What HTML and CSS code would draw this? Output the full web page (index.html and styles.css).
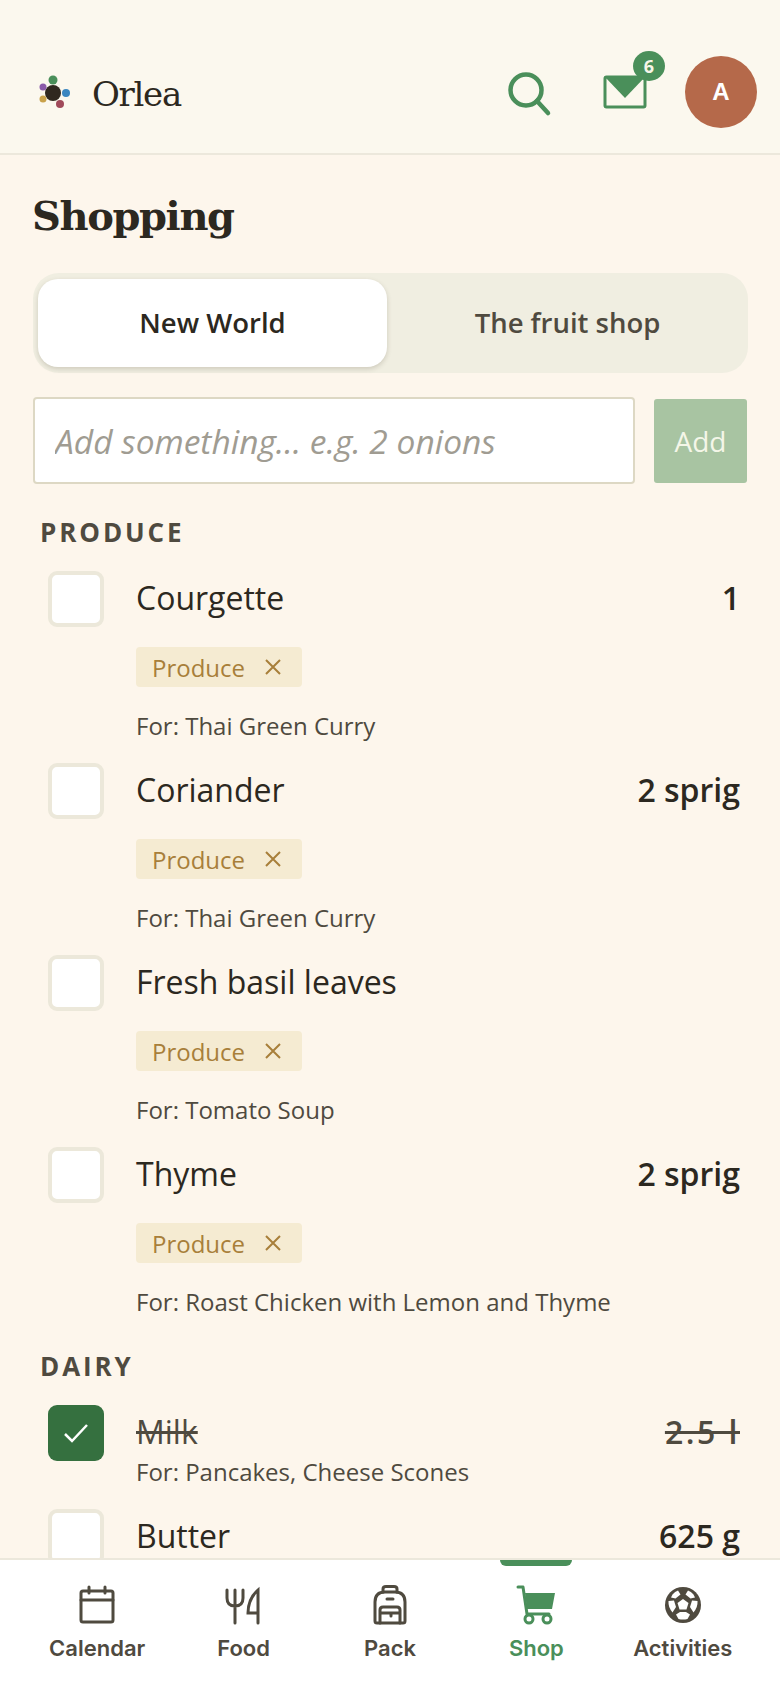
FILE: index.html
```html
<!DOCTYPE html>
<html lang="en">
<head>
    <meta charset="UTF-8">
    <title>Orlea - Shopping</title>
    <link rel="stylesheet" href="styles.css">
</head>
<body>
<div class="app">
    <header class="topbar">
        <div class="brand">
            <svg class="brand-mark" width="40" height="40" viewBox="0 0 40 40">
                <circle cx="20" cy="19" r="8" fill="#30281f"/>
                <circle cx="20" cy="6" r="4.5" fill="#4a8f5a"/>
                <circle cx="10" cy="13" r="3.5" fill="#8a5aa8"/>
                <circle cx="33" cy="19" r="4" fill="#3a86c0"/>
                <circle cx="10" cy="25" r="3.5" fill="#c9a24a"/>
                <circle cx="27" cy="30" r="4" fill="#a04a5a"/>
            </svg>
            <span class="brand-name">Orlea</span>
        </div>
        <div class="actions">
            <svg class="search" width="48" height="48" viewBox="0 0 48 48" fill="none" stroke="#4a8f5a" stroke-width="4.5" stroke-linecap="round">
                <circle cx="20" cy="20" r="15.5"/>
                <path d="M31 31 L42 43"/>
            </svg>
            <div class="mail">
                <svg width="44" height="34" viewBox="0 0 44 34">
                    <rect x="2" y="2" width="40" height="30" rx="1.5" fill="none" stroke="#4a8f5a" stroke-width="3"/>
                    <path d="M2 2 H42 L22 23 Z" fill="#4a8f5a"/>
                </svg>
                <span class="badge">6</span>
            </div>
            <div class="avatar">A</div>
        </div>
    </header>

    <main class="content">
        <h1>Shopping</h1>
        <div class="tabs">
            <div class="tab active">New World</div>
            <div class="tab">The fruit shop</div>
        </div>
        <form class="add-row">
            <input class="add-input" type="text" placeholder="Add something... e.g. 2 onions">
            <button class="add-btn" type="button">Add</button>
        </form>

        <h2 class="group">Produce</h2>
        <div class="item">
            <div class="check"></div>
            <div class="item-body">
                <div class="item-name">Courgette</div>
                <span class="tag">Produce <svg width="18" height="18" viewBox="0 0 18 18" fill="none" stroke="#a87f3a" stroke-width="2"><path d="M2 2 L16 16 M16 2 L2 16"/></svg></span>
                <div class="item-for">For: Thai Green Curry</div>
            </div>
            <div class="item-qty">1</div>
        </div>
        <div class="item">
            <div class="check"></div>
            <div class="item-body">
                <div class="item-name">Coriander</div>
                <span class="tag">Produce <svg width="18" height="18" viewBox="0 0 18 18" fill="none" stroke="#a87f3a" stroke-width="2"><path d="M2 2 L16 16 M16 2 L2 16"/></svg></span>
                <div class="item-for">For: Thai Green Curry</div>
            </div>
            <div class="item-qty">2 sprig</div>
        </div>
        <div class="item">
            <div class="check"></div>
            <div class="item-body">
                <div class="item-name">Fresh basil leaves</div>
                <span class="tag">Produce <svg width="18" height="18" viewBox="0 0 18 18" fill="none" stroke="#a87f3a" stroke-width="2"><path d="M2 2 L16 16 M16 2 L2 16"/></svg></span>
                <div class="item-for">For: Tomato Soup</div>
            </div>
            <div class="item-qty"></div>
        </div>
        <div class="item">
            <div class="check"></div>
            <div class="item-body">
                <div class="item-name">Thyme</div>
                <span class="tag">Produce <svg width="18" height="18" viewBox="0 0 18 18" fill="none" stroke="#a87f3a" stroke-width="2"><path d="M2 2 L16 16 M16 2 L2 16"/></svg></span>
                <div class="item-for">For: Roast Chicken with Lemon and Thyme</div>
            </div>
            <div class="item-qty">2 sprig</div>
        </div>

        <h2 class="group dairy">Dairy</h2>
        <div class="item done">
            <div class="check checked">
                <svg width="26" height="22" viewBox="0 0 26 22" fill="none" stroke="#fff" stroke-width="2.5"><path d="M2 12 L9 19 L24 3"/></svg>
            </div>
            <div class="item-body">
                <div class="item-name">Milk</div>
                <div class="item-for">For: Pancakes, Cheese Scones</div>
            </div>
            <div class="item-qty">2.5 l</div>
        </div>
        <div class="item">
            <div class="check"></div>
            <div class="item-body">
                <div class="item-name">Butter</div>
            </div>
            <div class="item-qty">625 g</div>
        </div>
    </main>

    <nav class="tabbar">
        <a class="nav-item">
            <svg width="40" height="40" viewBox="0 0 40 40" fill="none" stroke="#4f4a3f" stroke-width="3" stroke-linejoin="round" stroke-linecap="round">
                <rect x="4" y="6" width="32" height="31" rx="2"/>
                <path d="M4 15 H36 M12 2 V8 M28 2 V8"/>
            </svg>
            <span>Calendar</span>
        </a>
        <a class="nav-item">
            <svg width="40" height="40" viewBox="0 0 40 40" fill="none" stroke="#4f4a3f" stroke-width="3" stroke-linecap="round">
                <path d="M3 5 V13 Q3 21 11 21 Q19 21 19 13 V5 M11 5 V38"/>
                <path d="M34 38 V5 Q24 14 24 28 H34"/>
            </svg>
            <span>Food</span>
        </a>
        <a class="nav-item">
            <svg width="40" height="40" viewBox="0 0 40 40" fill="none" stroke="#4f4a3f" stroke-width="3" stroke-linejoin="round" stroke-linecap="round">
                <path d="M5 36 V17 Q5 7 15 7 H25 Q35 7 35 17 V36 Q35 38 33 38 H7 Q5 38 5 36 Z"/>
                <path d="M13 7 V4 Q13 1.500 16 1.500 H24 Q27 1.500 27 4 V7 M17 14 H23"/>
                <path d="M10 38 V25 Q10 22 13 22 H27 Q30 22 30 25 V38 M10 28 H30 M21 28 V31"/>
            </svg>
            <span>Pack</span>
        </a>
        <a class="nav-item current">
            <svg width="40" height="40" viewBox="0 0 40 40">
                <path d="M2 2 H7 L11 29 H33" fill="none" stroke="#4a8f5a" stroke-width="3" stroke-linecap="round" stroke-linejoin="round"/>
                <path d="M9 8 H39 L36 24 H11 Z" fill="#4a8f5a"/>
                <circle cx="13" cy="34" r="4" fill="none" stroke="#4a8f5a" stroke-width="3"/>
                <circle cx="31" cy="34" r="4" fill="none" stroke="#4a8f5a" stroke-width="3"/>
            </svg>
            <span>Shop</span>
        </a>
        <a class="nav-item">
            <svg width="40" height="40" viewBox="0 0 40 40">
                <circle cx="20" cy="20" r="18" fill="#4f4a3f"/>
                <g fill="#fff">
                    <path d="M20 14 L25.500 18 L23.500 24.500 H16.500 L14.500 18 Z"/>
                    <path d="M9.500 9.500 Q12 6.500 15 5.500 L17.500 9.500 L12.500 13.500 L8 12.500 Z"/>
                    <path d="M30.500 9.500 Q28 6.500 25 5.500 L22.500 9.500 L27.500 13.500 L32 12.500 Z"/>
                    <path d="M5.500 16 L11 15.500 L13 22 L9.500 27.500 Q5 22 5.500 16 Z"/>
                    <path d="M34.500 16 L29 15.500 L27 22 L30.500 27.500 Q35 22 34.500 16 Z"/>
                    <path d="M13 29.500 L17 27 H23 L27 29.500 L24.500 34 Q20 35 15.500 34 Z"/>
                </g>
            </svg>
            <span>Activities</span>
        </a>
    </nav>
</div>
</body>
</html>
```

FILE: styles.css
```css
* {
    margin: 0;
    padding: 0;
    box-sizing: border-box;
}

body {
    background: #fdf6ec;
    color: #2c2820;
    font-family: "Open Sans", "Noto Sans", sans-serif;
}

.app {
    height: 1688px;
    display: flex;
    flex-direction: column;
    overflow: hidden;
}

.topbar {
    flex: none;
    height: 155px;
    padding: 54px 23px 0 33px;
    display: flex;
    justify-content: space-between;
    background: #fbf8ee;
    border-bottom: 2px solid #ece8dc;
}

.brand {
    display: flex;
    align-items: center;
    height: 80px;
}

.brand-name {
    margin-left: 19px;
    font-family: "DejaVu Serif", serif;
    font-size: 34px;
    letter-spacing: -1.3px;
}

.actions {
    display: flex;
    align-items: flex-start;
}

.search {
    margin-top: 16px;
    margin-right: 49px;
}

.mail {
    position: relative;
    margin-top: 21px;
    margin-right: 38px;
    width: 44px;
}

.badge {
    position: absolute;
    left: 30px;
    top: -24px;
    width: 32px;
    height: 30px;
    border-radius: 50%;
    background: #4a8f5a;
    color: #f7f5e8;
    font-size: 18px;
    font-weight: 700;
    line-height: 30px;
    text-align: center;
}

.avatar {
    width: 72px;
    height: 72px;
    margin-top: 2px;
    border-radius: 50%;
    background: #b5694a;
    color: #fff;
    font-family: "Liberation Sans", sans-serif;
    font-size: 24px;
    font-weight: 700;
    line-height: 72px;
    text-align: center;
}

.content {
    flex: 1;
    min-height: 0;
    overflow: hidden;
    padding: 34px 32px 0 33px;
}

h1 {
    margin-left: -1px;
    font-family: "DejaVu Serif", serif;
    font-size: 40px;
    font-weight: 700;
    line-height: 54px;
    letter-spacing: -1.4px;
}

.tabs {
    display: flex;
    height: 100px;
    margin-top: 30px;
    padding: 6px 0 6px 5px;
    border-radius: 26px;
    background: #f0eee1;
}

.tab {
    flex: 1;
    height: 88px;
    border-radius: 20px;
    color: #4f4a3f;
    font-size: 27.500px;
    font-weight: 600;
    line-height: 88px;
    text-align: center;
}

.tab.active {
    flex: none;
    width: 349px;
    background: #fff;
    color: #2c2820;
    box-shadow: 0 2px 5px rgba(70, 60, 40, 0.2);
}

.add-row {
    display: flex;
    align-items: center;
    margin-top: 24px;
}

.add-input {
    width: 602px;
    height: 87px;
    padding: 0 20px;
    border: 2px solid #ddd8c4;
    border-radius: 4px;
    outline: none;
    background: #fff;
    font-family: inherit;
    font-size: 33.500px;
    font-style: italic;
}

.add-input::placeholder {
    color: #a09c92;
    opacity: 1;
}

.add-btn {
    width: 93px;
    height: 84px;
    margin-left: 19px;
    border: 0;
    border-radius: 3px;
    background: #a8c4a2;
    color: #f4f6e8;
    font-family: inherit;
    font-size: 28px;
}

.group {
    margin: 33px 0 0 7px;
    color: #4f4a3f;
    font-size: 26px;
    font-weight: 700;
    line-height: 30px;
    letter-spacing: 2.900px;
    text-transform: uppercase;
}

.group.dairy {
    margin-top: 12px;
}

.item {
    display: grid;
    grid-template-columns: 56px minmax(0, 1fr) auto;
    column-gap: 32px;
    height: 192px;
    padding: 0 8px 0 15px;
}

.group + .item {
    margin-top: 24px;
}

.check {
    display: flex;
    align-items: center;
    justify-content: center;
    width: 56px;
    height: 56px;
    border: 4px solid #ece8da;
    border-radius: 9px;
    background: #fff;
}

.check.checked {
    border: 0;
    background: #35703f;
}

.item-name {
    font-size: 32px;
    line-height: 54px;
}

.item-qty {
    font-size: 32px;
    font-weight: 600;
    line-height: 54px;
}

.tag {
    display: inline-flex;
    align-items: center;
    gap: 19px;
    height: 40px;
    margin-top: 22px;
    padding: 0 20px 0 16px;
    border-radius: 4px;
    background: #f5ebd2;
    color: #a87f3a;
    font-size: 24px;
}

.item-for {
    margin-top: 22px;
    color: #4f4a3f;
    font-size: 24px;
    line-height: 34px;
    white-space: nowrap;
}

.item.done {
    height: 104px;
}

.item.done .item-name,
.item.done .item-qty {
    color: #4f4a3f;
    text-decoration: line-through;
}

.item.done .item-qty {
    letter-spacing: 2.500px;
}

.item.done .item-for {
    margin-top: -4px;
}

.tabbar {
    flex: none;
    position: relative;
    height: 130px;
    padding: 25px 24px 0;
    display: grid;
    grid-template-columns: repeat(5, 1fr);
    background: #fff;
    border-top: 2px solid #ece8dc;
}

.nav-item {
    position: relative;
    display: flex;
    flex-direction: column;
    align-items: center;
    color: #4f4a3f;
    font-family: "Inter", sans-serif;
    font-size: 22px;
    font-weight: 600;
}

.nav-item span {
    margin-top: 10px;
}

.nav-item.current {
    color: #4a8f5a;
}

.nav-item.current::before {
    content: "";
    position: absolute;
    top: -25px;
    left: 37px;
    width: 72px;
    height: 6px;
    border-radius: 0 0 6px 6px;
    background: #4a8f5a;
}
```
